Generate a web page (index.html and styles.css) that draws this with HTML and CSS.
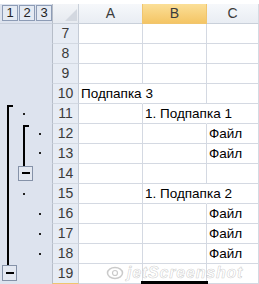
FILE: index.html
```html
<!DOCTYPE html>
<html>
<head>
<meta charset="utf-8">
<link rel="stylesheet" href="styles.css">
</head>
<body>
<div class="sheet">
  <div class="topbar"></div>
  <div class="main">
    <div class="gutter">
      <div class="gutter-head">
        <span class="lvl">1</span><span class="lvl">2</span><span class="lvl">3</span>
      </div>
      <svg class="outline" width="52" height="260" viewBox="0 0 52 260">
        <rect x="7" y="81" width="2" height="160" fill="#000"/>
        <rect x="7" y="81" width="6" height="2" fill="#000"/>
        <rect x="23" y="101" width="2" height="41" fill="#000"/>
        <rect x="23" y="101" width="6" height="2" fill="#000"/>
        <rect x="23" y="89" width="2" height="2" fill="#222"/>
        <rect x="39" y="109" width="2" height="2" fill="#222"/>
        <rect x="39" y="128" width="2" height="2" fill="#222"/>
        <rect x="23" y="169" width="2" height="2" fill="#222"/>
        <rect x="39" y="189" width="2" height="2" fill="#222"/>
        <rect x="39" y="209" width="2" height="2" fill="#222"/>
        <rect x="39" y="229" width="2" height="2" fill="#222"/>
        <rect x="18.5" y="142.5" width="14" height="14" fill="#e3e8f1" stroke="#8592a8"/>
        <rect x="22" y="148" width="8" height="2" fill="#000"/>
        <rect x="2.5" y="241.5" width="14" height="15" fill="#e3e8f1" stroke="#8592a8"/>
        <rect x="6" y="248" width="8" height="2" fill="#000"/>
      </svg>
    </div>
    <div class="grid">
      <div class="corner"><span class="tri"></span></div>
      <div class="colh">A</div>
      <div class="colh sel">B</div>
      <div class="colh">C</div>

      <div class="rowh">7</div><div class="cell"></div><div class="cell"></div><div class="cell"></div>
      <div class="rowh">8</div><div class="cell"></div><div class="cell"></div><div class="cell"></div>
      <div class="rowh">9</div><div class="cell"></div><div class="cell"></div><div class="cell"></div>
      <div class="rowh">10</div><div class="cell over">Подпапка 3</div><div class="cell"></div><div class="cell"></div>
      <div class="rowh">11</div><div class="cell"></div><div class="cell over">1. Подпапка 1</div><div class="cell"></div>
      <div class="rowh">12</div><div class="cell"></div><div class="cell"></div><div class="cell">Файл</div>
      <div class="rowh">13</div><div class="cell"></div><div class="cell"></div><div class="cell">Файл</div>
      <div class="rowh">14</div><div class="cell"></div><div class="cell"></div><div class="cell"></div>
      <div class="rowh">15</div><div class="cell"></div><div class="cell over">1. Подпапка 2</div><div class="cell"></div>
      <div class="rowh">16</div><div class="cell"></div><div class="cell"></div><div class="cell">Файл</div>
      <div class="rowh">17</div><div class="cell"></div><div class="cell"></div><div class="cell">Файл</div>
      <div class="rowh">18</div><div class="cell"></div><div class="cell"></div><div class="cell">Файл</div>
      <div class="rowh last">19</div><div class="cell"></div><div class="cell"></div><div class="cell"></div>
    </div>
  </div>
  <div class="selection"></div>
  <div class="watermark">
    <svg class="wm-logo" width="18" height="14" viewBox="0 0 18 14">
      <ellipse cx="9" cy="7" rx="7.5" ry="5.5" fill="none" stroke="rgba(150,150,150,0.5)" stroke-width="1.5"/>
      <circle cx="9" cy="7" r="2.5" fill="none" stroke="rgba(150,150,150,0.5)" stroke-width="1.2"/>
    </svg>
    <span>jetScreenshot</span>
  </div>
</div>
</body>
</html>
```

FILE: styles.css
```css
html, body {
  margin: 0;
  padding: 0;
  background: #fff;
}

.sheet {
  position: relative;
  width: 259px;
  height: 284px;
  overflow: hidden;
  font-family: "Liberation Sans", Arial, sans-serif;
}

.topbar {
  height: 4px;
  background: #fff;
}

.main {
  display: flex;
}

.gutter {
  width: 52px;
  background: #dde3ee;
  display: flex;
  flex-direction: column;
}

.gutter-head {
  height: 20px;
  box-sizing: border-box;
  border-bottom: 1px solid #c9d0dc;
  display: flex;
  gap: 1px;
  padding: 1px 0 0 2px;
}

.lvl {
  width: 14px;
  height: 14px;
  border: 1px solid #8d9cb6;
  background: #e4eaf3;
  color: #222;
  font-size: 13px;
  line-height: 14px;
  text-align: center;
}

.outline {
  display: block;
}

.grid {
  display: grid;
  grid-template-columns: 27px 64px 64px 52px;
  grid-auto-rows: 20px;
}

.corner {
  position: relative;
  box-sizing: border-box;
  border-left: 1px solid #b6bdc8;
  border-right: 1px solid #c9d0da;
  border-bottom: 1px solid #c9d0da;
  background: linear-gradient(#f3f5f8, #e6eaf0);
}

.tri {
  position: absolute;
  right: 1px;
  bottom: 2px;
  width: 0;
  height: 0;
  border-left: 12px solid transparent;
  border-bottom: 12px solid #d3d8e0;
}

.colh {
  box-sizing: border-box;
  border-right: 1px solid #d5dae2;
  border-bottom: 1px solid #c9d0da;
  background: linear-gradient(#f6f8fb, #e9edf3);
  color: #3b3b3b;
  font-size: 14px;
  line-height: 19px;
  text-align: center;
}

.colh.sel {
  background: linear-gradient(#fbdf98, #f4c565);
  border-left: 1px solid #f0c56e;
  border-right: 1px solid #f0c56e;
  border-bottom: 1px solid #f0c56e;
  margin-left: -1px;
}

.rowh {
  box-sizing: border-box;
  border-left: 1px solid #b6bdc8;
  border-right: 1px solid #c4cbd6;
  border-bottom: 1px solid #d3d9e2;
  background: #e7ecf4;
  color: #3b3b3b;
  font-size: 14px;
  line-height: 19px;
  text-align: center;
}

.rowh.last {
  border-bottom-color: #f0c56e;
}

.cell {
  box-sizing: border-box;
  border-right: 1px solid #d4d9e2;
  border-bottom: 1px solid #d4d9e2;
  color: #000;
  font-size: 13.5px;
  line-height: 19px;
  padding-left: 2px;
  white-space: nowrap;
}

.cell.over {
  position: relative;
  z-index: 1;
  background: #fff;
  border-right-color: transparent;
  overflow: visible;
}

.selection {
  position: absolute;
  left: 141px;
  top: 281px;
  width: 67px;
  height: 3px;
  background: #000;
}

.watermark {
  position: absolute;
  left: 106px;
  top: 264px;
  display: flex;
  align-items: center;
  gap: 3px;
  font-size: 16px;
  font-style: italic;
  font-weight: bold;
  color: rgba(255, 255, 255, 0.6);
  -webkit-text-stroke: 0.6px rgba(150, 150, 150, 0.45);
  letter-spacing: 0.8px;
}

.wm-logo {
  display: block;
}
```
